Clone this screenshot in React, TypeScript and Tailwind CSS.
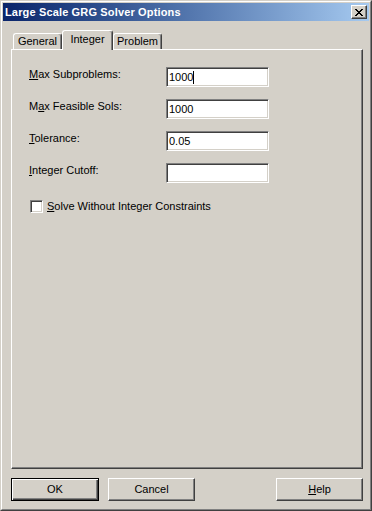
const raised =
  'border border-t-white border-l-white border-r-[#404040] border-b-[#404040] shadow-[inset_-1px_-1px_0_#808080]';
const sunken =
  'border border-t-[#808080] border-l-[#808080] border-r-white border-b-white shadow-[inset_1px_1px_0_#404040,inset_-1px_-1px_0_#D4D0C8]';

const Field = ({ label, value, caret }: { label: React.ReactNode; value: string; caret?: boolean }) => (
  <div className="flex items-start h-[20px]">
    <div className="w-[137px] pt-[1px] leading-[13px]">{label}</div>
    <div className={`${sunken} w-[103px] h-[20px] bg-white flex items-center pl-[2px] pt-[1px] leading-[13px]`}>
      <span>{value}</span>
      {caret && <span className="inline-block w-px h-[13px] bg-black" />}
    </div>
  </div>
);

const Tab = ({ label, active, w }: { label: string; active?: boolean; w: string }) => (
  <div
    className={`${w} flex items-center justify-center rounded-t-[3px] bg-[#D4D0C8] border-t border-l border-white border-r border-r-[#404040] shadow-[inset_-1px_0_0_#808080] ${
      active ? 'relative z-10 h-[20px] -mb-px pb-[2px]' : 'h-[16px]'
    }`}
  >
    {label}
  </div>
);

export default function App() {
  return (
    <div
      className="w-[372px] h-[511px] bg-[#D4D0C8] border border-t-[#D4D0C8] border-l-[#D4D0C8] border-r-[#404040] border-b-[#404040] text-[11px] text-black"
      style={{ fontFamily: '"Liberation Sans", Arial, sans-serif' }}
    >
      <div className="h-full border border-t-white border-l-white border-r-[#808080] border-b-[#808080] p-px flex flex-col">
        {/* Title bar */}
        <div className="h-[18px] flex items-center bg-gradient-to-r from-[#0A246A] to-[#A6CAF0] pl-[2px] pr-[2px]">
          <span className="text-white font-bold tracking-[0.15px] leading-[13px]">Large Scale GRG Solver Options</span>
          <div className={`${raised} ml-auto w-[16px] h-[14px] bg-[#D4D0C8] flex items-center justify-center`}>
            <svg width="8" height="7" viewBox="0 0 8 7" shapeRendering="crispEdges">
              <path
                d="M0 0h2v1h-2zM6 0h2v1h-2zM1 1h2v1h-2zM5 1h2v1h-2zM2 2h4v1h-4zM3 3h2v1h-2zM2 4h4v1h-4zM1 5h2v1h-2zM5 5h2v1h-2zM0 6h2v1h-2zM6 6h2v1h-2z"
                fill="#000"
              />
            </svg>
          </div>
        </div>

        <div className="flex-1 flex flex-col pl-[8px] pr-[6px]">
          {/* Tabs */}
          <div className="mt-[9px] h-[19px] flex items-end pl-[2px]">
            <Tab label="General" w="w-[49px]" />
            <Tab label="Integer" w="w-[51px]" active />
            <Tab label="Problem" w="w-[49px]" />
          </div>

          {/* Panel */}
          <div className="h-[420px] border border-t-white border-l-white border-r-[#404040] border-b-[#404040] shadow-[inset_-1px_-1px_0_#808080] pt-[17px] pl-[17px] flex flex-col gap-[12px]">
            <Field label={<><u>M</u>ax Subproblems:</>} value="1000" caret />
            <Field label={<>M<u>a</u>x Feasible Sols:</>} value="1000" />
            <Field label={<><u>T</u>olerance:</>} value="0.05" />
            <Field label={<><u>I</u>nteger Cutoff:</>} value="" />
            <div className="flex items-center mt-[5px] ml-[1px] h-[13px]">
              <div className={`${sunken} w-[13px] h-[13px] bg-white`} />
              <span className="ml-[4px] leading-[13px]">
                <u>S</u>olve Without Integer Constraints
              </span>
            </div>
          </div>

          {/* Buttons */}
          <div className="mt-[9px] h-[23px] flex">
            <button className="w-[88px] h-[23px] bg-[#D4D0C8] border border-black shadow-[inset_1px_1px_0_white,inset_-1px_-1px_0_#404040,inset_-2px_-2px_0_#808080] leading-[13px]">
              OK
            </button>
            <button className={`${raised} ml-[9px] w-[87px] h-[23px] bg-[#D4D0C8] leading-[13px]`}>Cancel</button>
            <button className={`${raised} ml-auto w-[87px] h-[23px] bg-[#D4D0C8] leading-[13px]`}>
              <u>H</u>elp
            </button>
          </div>
        </div>
      </div>
    </div>
  );
}
